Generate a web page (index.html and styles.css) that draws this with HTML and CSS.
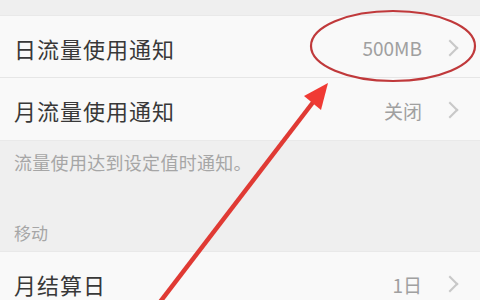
FILE: index.html
```html
<!DOCTYPE html>
<html lang="zh-CN">
<head>
<meta charset="UTF-8" />
<meta name="viewport" content="width=device-width, initial-scale=1" />
<title>流量通知</title>
<link rel="stylesheet" href="styles.css">
</head>
<body>

<div class="page">
  <div class="group">
    <div class="row">
      <span class="label">日流量使用通知</span>
      <span class="value">500MB</span>
      <span class="chevron"></span>
    </div>
    <div class="row">
      <span class="label">月流量使用通知</span>
      <span class="value">关闭</span>
      <span class="chevron"></span>
    </div>
  </div>
  <div class="hint">流量使用达到设定值时通知。</div>
  <div class="section-title">移动</div>
  <div class="group">
    <div class="row">
      <span class="label">月结算日</span>
      <span class="value">1日</span>
      <span class="chevron"></span>
    </div>
  </div>

  <!-- hand-drawn annotation on top of the screenshot -->
  <svg class="annotation" width="480" height="300" viewBox="0 0 480 300">
    <ellipse cx="393" cy="46" rx="82" ry="35" fill="none" stroke="#c0393b" stroke-width="2.2" />
    <line x1="160" y1="302" x2="314" y2="101" stroke="#e03a34" stroke-width="4.5" />
    <polygon points="328,83 321,110 304,96" fill="#f03a34" />
  </svg>
</div>

</body>
</html>
```

FILE: styles.css
```css
html, body {
  margin: 0;
  padding: 0;
}
body {
  background: #efefef;
  font-family: "Noto Sans CJK SC", "Noto Sans", sans-serif;
  overflow: hidden;
}
.page {
  position: relative;
  width: 480px;
  height: 300px;
  padding-top: 15px;
  box-sizing: border-box;
}
.group {
  background: #f9f9f9;
  border-top: 1px solid #e9e9e9;
  border-bottom: 1px solid #e9e9e9;
}
.row {
  display: flex;
  align-items: center;
  height: 62px;
  padding: 2px 20px 0 14px;
  box-sizing: border-box;
  border-bottom: 1px solid #e6e6e6;
}
.row:last-child {
  border-bottom: none;
}
.label {
  flex: 1;
  font-size: 22px;
  letter-spacing: 1px;
  color: #383838;
}
.value {
  font-size: 19px;
  color: #a0a0a0;
  margin-right: 22px;
}
.chevron {
  width: 10px;
  height: 10px;
  border-top: 2px solid #c8c8c8;
  border-right: 2px solid #c8c8c8;
  transform: rotate(45deg);
  margin-right: 4px;
}
.hint {
  font-size: 18px;
  letter-spacing: 0.3px;
  color: #a6a6a6;
  padding: 8px 14px 0;
  height: 36px;
}
.section-title {
  font-size: 17px;
  color: #a6a6a6;
  padding: 35px 14px 0;
  height: 66px;
  box-sizing: border-box;
}
.annotation {
  position: absolute;
  left: 0;
  top: 0;
}
```
